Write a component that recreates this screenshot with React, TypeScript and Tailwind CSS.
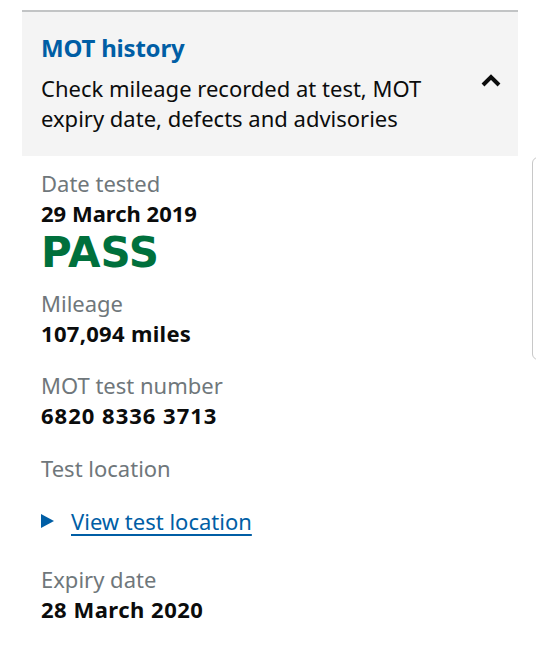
import React from "react";

const font = { fontFamily: '"Noto Sans", "Open Sans", Arial, sans-serif' };

function Row({ label, value, className = "", valueClass = "" }: { label: string; value: string; className?: string; valueClass?: string }) {
  return (
    <div className={className}>
      <div className="text-[22px] leading-[30px] text-[#6f777b]">{label}</div>
      <div className={`text-[22px] leading-[30px] font-bold text-[#0b0c0c] ${valueClass}`}>{value}</div>
    </div>
  );
}

export default function App() {
  return (
    <div className="relative w-[536px] h-[650px] bg-white overflow-hidden" style={font}>
      <div className="pt-[10px] px-[20px] w-[496px] ml-[2px] box-content">
        <div className="border-t-2 border-[#c2c4c5]">
          <div className="bg-[#f4f4f4] flex pl-[19px] pr-[16px] pt-[20px] pb-[23px]">
            <div className="flex-1">
              <div className="text-[24px] leading-[32px] font-bold text-[#005ea5] tracking-[-0.2px]">MOT history</div>
              <div className="mt-[9px] text-[22px] leading-[30px] text-[#0b0c0c]">
                Check mileage recorded at test, MOT
                <br />
                expiry date, defects and advisories
              </div>
            </div>
            <div className="pt-[40px]">
              <svg width="22" height="16" viewBox="0 0 22 16">
                <path d="M3 13 L11 5 L19 13" fill="none" stroke="#0b0c0c" strokeWidth="4" />
              </svg>
            </div>
          </div>
        </div>
        <div className="pl-[19px] pt-[12px]">
          <Row label="Date tested" value="29 March 2019" />
          <div
            className="text-[42px] leading-[50px] mb-[10px] font-bold text-[#00703c]"
            style={{ fontFamily: '"DejaVu Sans", "Noto Sans", sans-serif' }}
          >
            PASS
          </div>
          <Row label="Mileage" value="107,094 miles" valueClass="tracking-[0.3px]" />
          <Row label="MOT test number" value="6820 8336 3713" className="mt-[22px]" valueClass="tracking-[1px]" />
          <div className="mt-[23px] text-[22px] leading-[30px] text-[#6f777b]">Test location</div>
          <div className="mt-[23px] flex items-center gap-[15px] text-[22px] leading-[30px]">
            <svg width="15" height="16" viewBox="0 0 15 16">
              <path d="M0 1 L13 8 L0 15 Z" fill="#005ea5" />
            </svg>
            <span className="text-[#005ea5] underline underline-offset-[4px]">View test location</span>
          </div>
          <Row label="Expiry date" value="28 March 2020" className="mt-[28px]" valueClass="tracking-[0.5px]" />
        </div>
      </div>
      <div className="absolute left-[532px] top-[157px] w-[10px] h-[203px] border border-[#c8c8c8] rounded-l-[6px] bg-white" />
    </div>
  );
}
